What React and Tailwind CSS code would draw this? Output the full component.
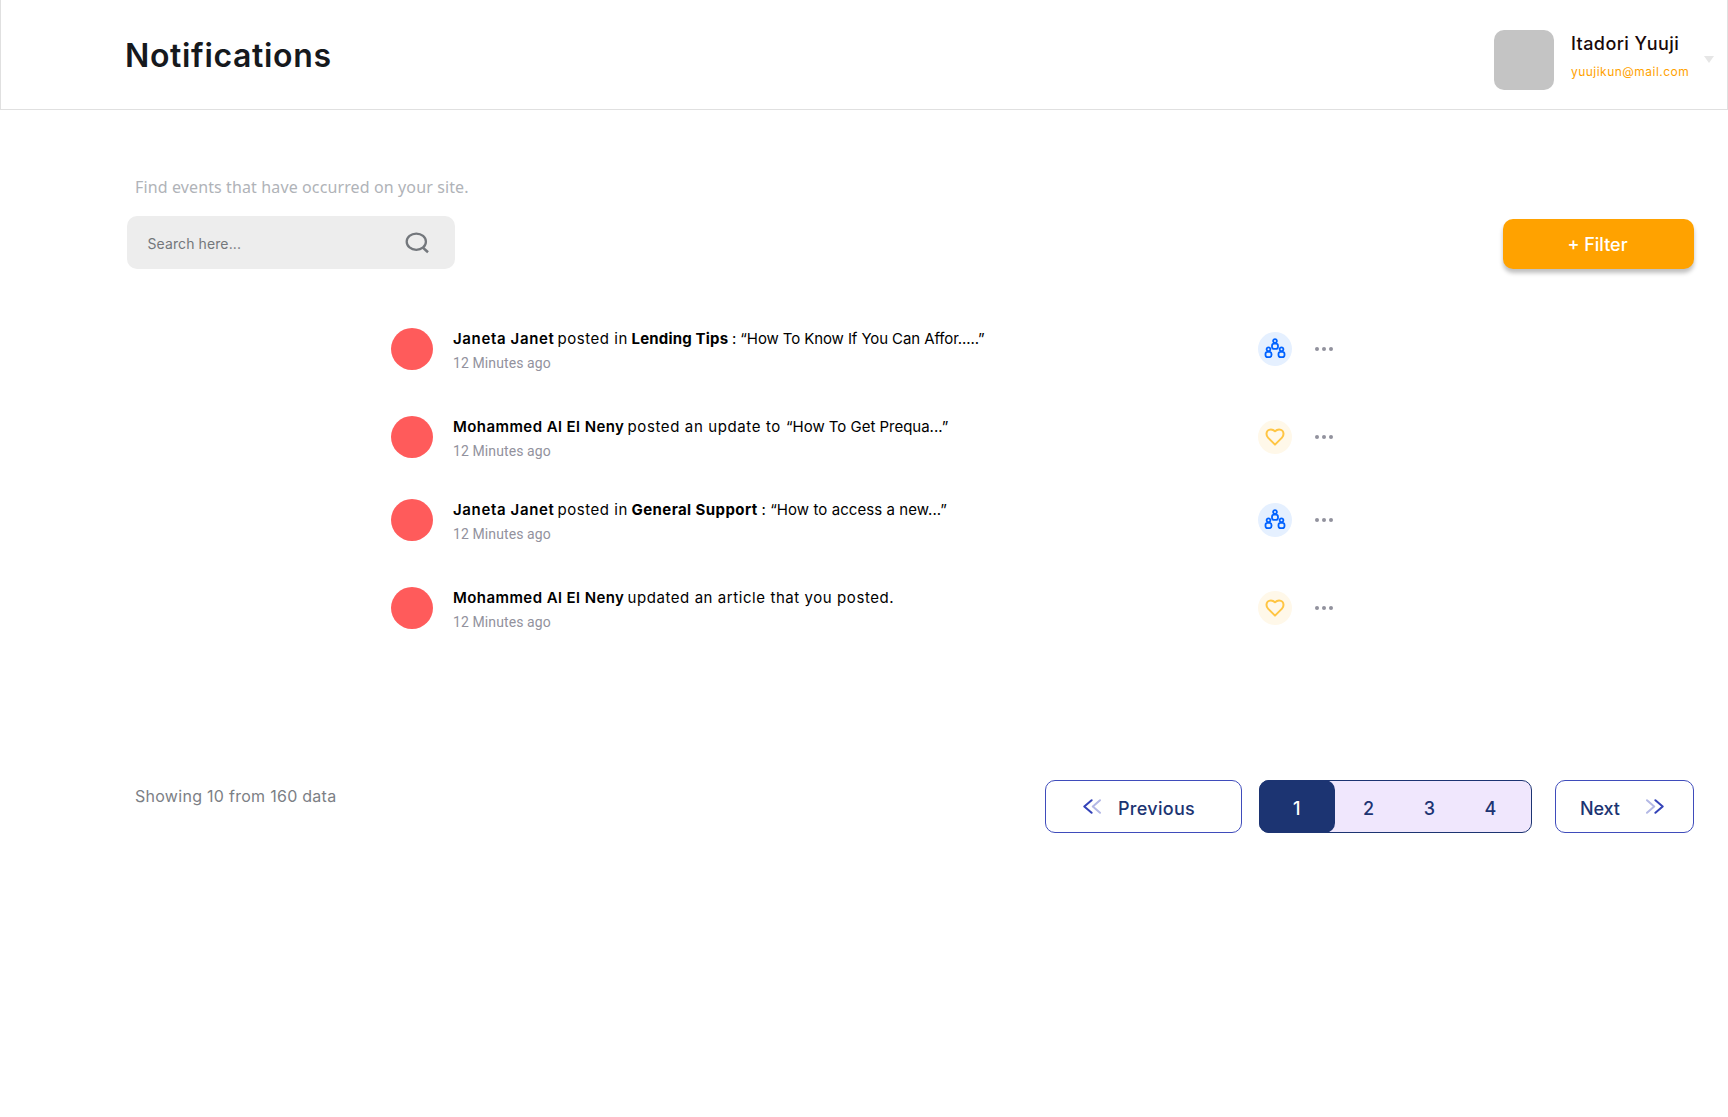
import React from 'react';

const rows = [
  {
    kind: 'group',
    gap: '',
    parts: [
      { text: 'Janeta Janet', cls: 'font-semibold tracking-[0.64px] w-[104.5px]' },
      { text: 'posted in', cls: 'tracking-[0.55px] w-[74px]' },
      { text: 'Lending Tips', cls: 'font-bold tracking-[0.18px] w-[100.5px]' },
      { text: ': “How To Know If You Can Affor.....”', cls: 'tracking-[-0.1px]' },
    ],
  },
  {
    kind: 'heart',
    gap: 'mt-[46px]',
    parts: [
      { text: 'Mohammed Al El Neny', cls: 'font-semibold tracking-[0.43px] w-[174.5px]' },
      { text: 'posted an update to', cls: 'tracking-[0.62px] w-[158.5px]' },
      { text: '“How To Get Prequa...”', cls: 'tracking-[-0.02px]' },
    ],
  },
  {
    kind: 'group',
    gap: 'mt-[41px]',
    parts: [
      { text: 'Janeta Janet', cls: 'font-semibold tracking-[0.64px] w-[104.5px]' },
      { text: 'posted in', cls: 'tracking-[0.55px] w-[74px]' },
      { text: 'General Support', cls: 'font-bold tracking-[0.42px] w-[130px]' },
      { text: ': “How to access a new...”', cls: 'tracking-[0.07px]' },
    ],
  },
  {
    kind: 'heart',
    gap: 'mt-[46px]',
    parts: [
      { text: 'Mohammed Al El Neny', cls: 'font-semibold tracking-[0.43px] w-[174.5px]' },
      { text: 'updated an article that you posted.', cls: 'tracking-[0.57px]' },
    ],
  },
];

function Person({ x, y }) {
  return (
    <g transform={`translate(${x} ${y})`}>
      <circle cx="0" cy="0" r="1.9" />
      <rect x="-3" y="2.7" width="6" height="5.2" rx="2.2" />
    </g>
  );
}

function KindIcon({ kind }) {
  if (kind === 'group') {
    return (
      <span className="flex size-[34px] items-center justify-center rounded-full bg-[#e5f0ff]">
        <svg width="34" height="34" viewBox="0 0 34 34" fill="none" stroke="#0062ff" strokeWidth="1.8">
          <Person x={17} y={9} />
          <Person x={10.5} y={17.2} />
          <Person x={23.5} y={17.2} />
        </svg>
      </span>
    );
  }
  return (
    <span className="flex size-[34px] items-center justify-center rounded-full bg-[#fff8e9]">
      <svg width="34" height="34" viewBox="0 0 34 34" fill="none" stroke="#ffc542" strokeWidth="2" strokeLinejoin="round">
        <path d="M17 11.2C15.7 9.9 14.3 9.4 12.9 9.4C10.3 9.4 8.5 11.4 8.5 13.8C8.5 15.3 9 16.6 10 17.6L17 24.6L24 17.6C25 16.6 25.5 15.3 25.5 13.8C25.5 11.4 23.7 9.4 21.1 9.4C19.7 9.4 18.3 9.9 17 11.2Z" />
      </svg>
    </span>
  );
}

function Chevrons({ flip }) {
  return (
    <svg
      className={flip ? 'rotate-180' : ''}
      width="18"
      height="15"
      viewBox="0 0 18 15"
      fill="none"
      strokeWidth="2"
      strokeLinecap="round"
      strokeLinejoin="round"
    >
      <path d="M17 1.2L9.8 7.5L17 13.8" stroke="#b3b8e5" />
      <path d="M8.6 1.2L1.3 7.5L8.6 13.8" stroke="#3342b8" />
    </svg>
  );
}

function Header() {
  return (
    <header className="flex h-[110px] items-start justify-between border border-t-0 border-[#e0e0e0] pl-[124px] pr-[13px]">
      <h1 className="mt-9 text-[32px] leading-10 font-semibold tracking-[0.66px] text-[#16191d]">Notifications</h1>
      <div className="mt-[30px] flex items-start">
        <div className="size-[60px] rounded-[10px] bg-[#c4c4c4]" />
        <div className="ml-[17px] w-[133px] whitespace-nowrap pt-[2px]">
          <p className="text-[18px] leading-6 font-medium tracking-[0.42px] text-[#1a0a0a]">Itadori Yuuji</p>
          <p className="mt-[6.5px] text-xs leading-[18px] tracking-[0.47px] text-[#ffa200]">yuujikun@mail.com</p>
        </div>
        <svg className="mt-[26px]" width="10" height="7" viewBox="0 0 10 7" fill="#e6e6e6">
          <path d="M0 0H10L5 7Z" />
        </svg>
      </div>
    </header>
  );
}

function Notification({ item }) {
  return (
    <li className={`flex h-[42px] items-center ${item.gap}`}>
      <div className="size-[42px] shrink-0 rounded-full bg-[#ff5b5b]" />
      <div className="ml-5 w-[805px] self-start whitespace-nowrap">
        <p className="flex text-[15px] leading-[22px] text-black">
          {item.parts.map((part) => (
            <span key={part.text} className={`shrink-0 ${part.cls}`}>{part.text}</span>
          ))}
        </p>
        <p className="mt-[3px] font-[Roboto,sans-serif] text-sm leading-5 tracking-[0.1px] text-[#92929d]">12 Minutes ago</p>
      </div>
      <KindIcon kind={item.kind} />
      <svg className="ml-[23px]" width="18" height="4" viewBox="0 0 18 4" fill="#92929d">
        <circle cx="2" cy="2" r="2" />
        <circle cx="9" cy="2" r="2" />
        <circle cx="16" cy="2" r="2" />
      </svg>
    </li>
  );
}

export default function App() {
  return (
    <div className="min-h-[1117px] w-[1728px] bg-white font-[Inter,sans-serif]">
      <Header />
      <section className="flex items-end justify-between pt-[65px] pr-[34px] pl-[127px]">
        <div>
          <p className="pl-2 font-['Noto_Sans',sans-serif] text-base leading-6 tracking-[0.12px] text-[#b0b3b8]">
            Find events that have occurred on your site.
          </p>
          <div className="mt-[17px] flex h-[53px] w-[328px] items-center justify-between rounded-[10px] bg-[#ededed] pr-[26px] pl-[20.5px]">
            <span className="pt-[3px] text-sm tracking-[0.1px] text-[#74777b]">Search here...</span>
            <svg width="24" height="22" viewBox="0 0 24 22" fill="none" stroke="#73777c" strokeWidth="2.3">
              <ellipse cx="11.3" cy="9.7" rx="9.6" ry="8.1" />
              <path d="M17.6 15.4L23 20.2" strokeWidth="2.6" />
            </svg>
          </div>
        </div>
        <button className="h-[50px] w-[191px] rounded-[10px] bg-[#ffa200] pr-[2px] text-[18px] font-medium text-white shadow-[0_4px_4px_rgba(0,0,0,0.25)]">
          + Filter
        </button>
      </section>

      <ul className="mt-[59px] ml-[391px]">
        {rows.map((item, i) => (
          <Notification key={i} item={item} />
        ))}
      </ul>

      <footer className="mt-[151px] flex items-start pr-[34px] pl-[135px]">
        <p className="mt-1 text-base leading-6 tracking-[0.28px] text-[#7c8085]">Showing 10 from 160 data</p>
        <div className="ml-auto flex h-[53px] text-[18px] font-medium text-[#1c3472]">
          <button className="flex w-[197px] items-center rounded-[10px] border border-[#3f4cbb] pl-[37px]">
            <Chevrons />
            <span className="ml-[17px] pt-1 tracking-[0.3px]">Previous</span>
          </button>
          <div className="ml-[17px] flex w-[273px] rounded-[10px] border border-[#1c3472] bg-[#f0e7fd]">
            <span className="-my-px -ml-px flex w-[75.5px] items-center justify-center rounded-[10px] bg-[#1c3472] pt-1 text-white">1</span>
            <span className="ml-[3.5px] flex w-[61px] items-center justify-center pt-1">2</span>
            <span className="flex w-[61px] items-center justify-center pt-1">3</span>
            <span className="flex w-[61px] items-center justify-center pt-1">4</span>
          </div>
          <button className="ml-[23px] flex w-[139px] items-center rounded-[10px] border border-[#3f4cbb] pl-[24px]">
            <span className="pt-1 tracking-[-0.1px]">Next</span>
            <span className="ml-[26px]"><Chevrons flip /></span>
          </button>
        </div>
      </footer>
    </div>
  );
}
